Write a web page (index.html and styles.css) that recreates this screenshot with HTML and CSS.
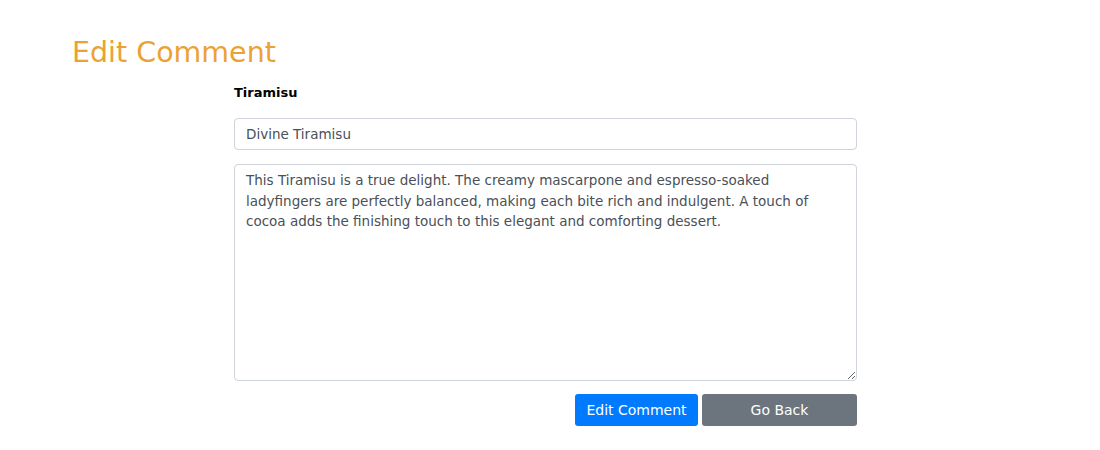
FILE: index.html
```html
<!DOCTYPE html>
<html>
<head>
<meta charset="utf-8">
<link rel="stylesheet" href="styles.css">
</head>
<body>
<div class="page">
  <h1 class="title">Edit Comment</h1>
  <form class="form">
    <div class="dish">Tiramisu</div>
    <input class="field" type="text" value="Divine Tiramisu">
    <textarea class="area">This Tiramisu is a true delight. The creamy mascarpone and espresso-soaked ladyfingers are perfectly balanced, making each bite rich and indulgent. A touch of cocoa adds the finishing touch to this elegant and comforting dessert.</textarea>
    <div class="actions">
      <button type="button" class="btn btn-primary">Edit Comment</button>
      <button type="button" class="btn btn-secondary">Go Back</button>
    </div>
  </form>
</div>
</body>
</html>
```

FILE: styles.css
```css
* { box-sizing: border-box; }
body {
  margin: 0;
  background: #fff;
  font-family: "DejaVu Sans", "Open Sans", sans-serif;
  color: #212529;
}
.page {
  padding: 35px 0 0 72px;
}
.title {
  margin: 0;
  font-size: 28.5px;
  font-weight: 400;
  color: #eba234;
  line-height: 36px;
}
.form {
  margin: 14px 0 0 162px;
  width: 623px;
  display: flex;
  flex-direction: column;
}
.dish {
  font-weight: 700;
  font-size: 13px;
  line-height: 16px;
  color: #000;
  margin-bottom: 17px;
}
.field, .area {
  width: 100%;
  font-family: inherit;
  font-size: 13.5px;
  color: #495057;
  border: 1px solid #ced4da;
  border-radius: 4px;
  padding: 6px 11px;
  background: #fff;
  outline: none;
}
.field {
  height: 32px;
  margin-bottom: 14px;
}
.area {
  height: 217px;
  line-height: 20.5px;
  padding: 5px 11px;
  resize: vertical;
}
.actions {
  display: flex;
  justify-content: flex-end;
  gap: 4px;
  margin-top: 13px;
}
.btn {
  height: 32px;
  border: none;
  border-radius: 3px;
  font-family: inherit;
  font-size: 14px;
  color: #fff;
  padding: 0 8px;
}
.btn-primary { background: #007bff; width: 123px; }
.btn-secondary { background: #6c757d; width: 155px; }
```
